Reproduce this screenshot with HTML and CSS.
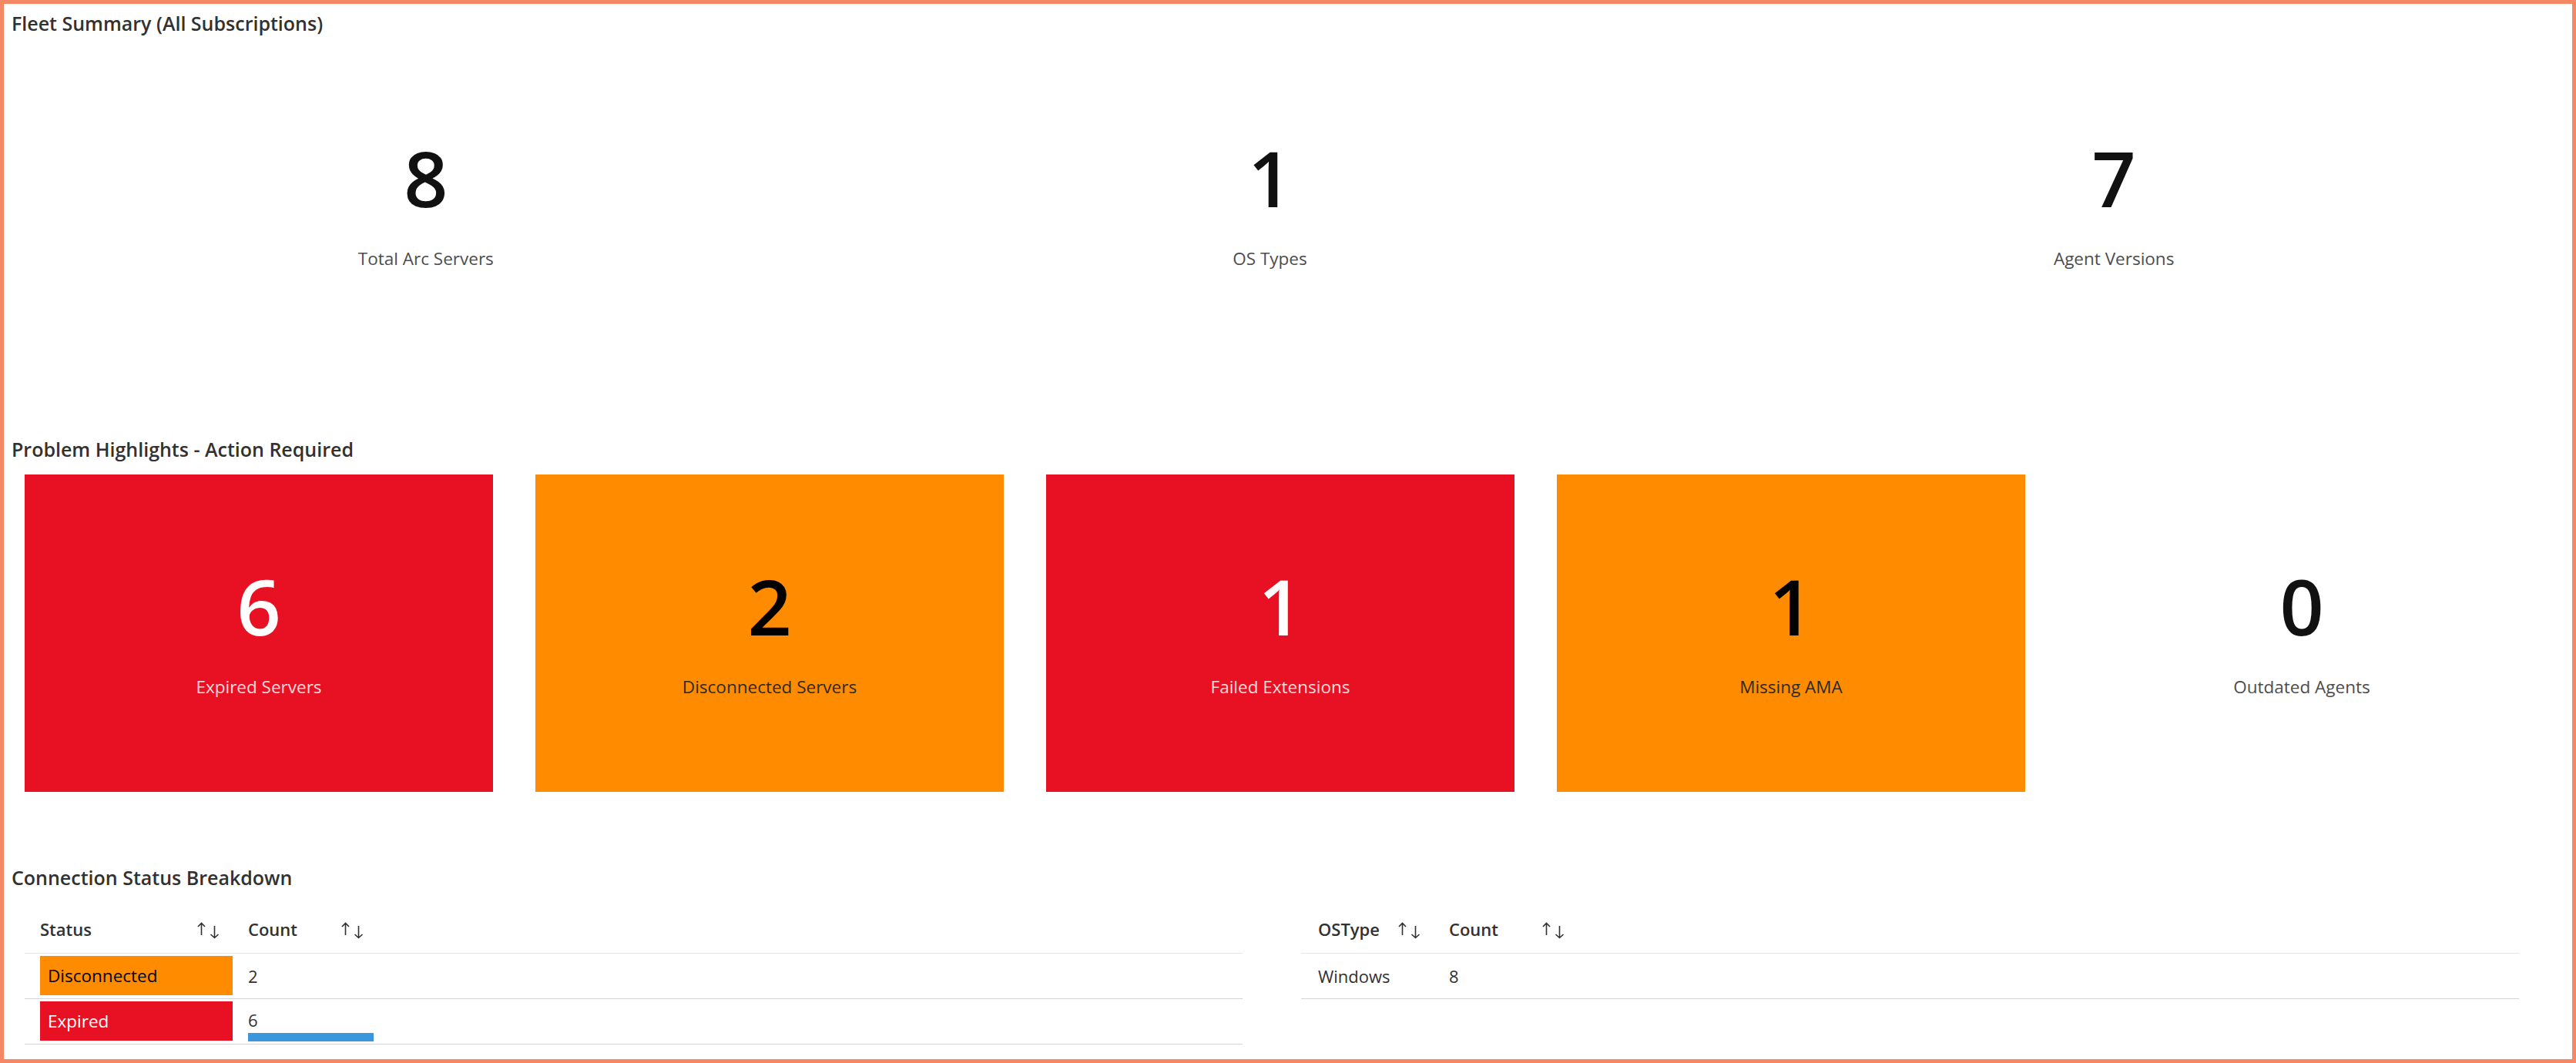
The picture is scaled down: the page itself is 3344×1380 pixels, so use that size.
FILE: index.html
```html
<!DOCTYPE html>
<html lang="en">
<head>
<meta charset="utf-8">
<title>Fleet Summary</title>
<link rel="stylesheet" href="styles.css">
</head>
<body>
<div class="frame">
  <section class="section">
    <h2 class="title">Fleet Summary (All Subscriptions)</h2>
    <div class="fleet-tiles">
      <div class="tile"><div class="num">8</div><div class="label">Total Arc Servers</div></div>
      <div class="tile"><div class="num">1</div><div class="label">OS Types</div></div>
      <div class="tile"><div class="num">7</div><div class="label">Agent Versions</div></div>
    </div>
  </section>

  <section class="section gap">
    <h2 class="title t2">Problem Highlights - Action Required</h2>
    <div class="problem-tiles">
      <div class="tile red"><div class="num">6</div><div class="label">Expired Servers</div></div>
      <div class="tile orange"><div class="num">2</div><div class="label">Disconnected Servers</div></div>
      <div class="tile red"><div class="num">1</div><div class="label">Failed Extensions</div></div>
      <div class="tile orange"><div class="num">1</div><div class="label">Missing AMA</div></div>
      <div class="tile"><div class="num">0</div><div class="label">Outdated Agents</div></div>
    </div>
  </section>

  <section class="section gap">
    <h2 class="title">Connection Status Breakdown</h2>
    <div class="tables">
      <table class="grid">
        <colgroup><col class="c-status"><col class="c-count"><col></colgroup>
        <thead>
          <tr>
            <th class="first"><div class="th-in"><span>Status</span>
              <svg class="sort" viewBox="0 0 30 22" width="30" height="22"><path d="M5.5 17V1.5M1 6l4.5-4.5L10 6M22.5 5v15.5M17.5 16l5 4.5 5-4.5" fill="none" stroke="#323130" stroke-width="1.6"/></svg></div></th>
            <th><div class="th-in"><span>Count</span>
              <svg class="sort" viewBox="0 0 30 22" width="30" height="22"><path d="M5.5 17V1.5M1 6l4.5-4.5L10 6M22.5 5v15.5M17.5 16l5 4.5 5-4.5" fill="none" stroke="#323130" stroke-width="1.6"/></svg></div></th>
            <th></th>
          </tr>
        </thead>
        <tbody>
          <tr>
            <td class="first pad"><div class="chip chip-orange">Disconnected</div></td>
            <td>2</td>
            <td></td>
          </tr>
          <tr>
            <td class="first pad"><div class="chip chip-red">Expired</div></td>
            <td class="barcell"><div class="barval">6</div><div class="bar" style="width:163px"></div></td>
            <td></td>
          </tr>
        </tbody>
      </table>

      <table class="grid right">
        <colgroup><col class="c-os"><col class="c-count"><col></colgroup>
        <thead>
          <tr>
            <th class="first"><div class="th-in"><span>OSType</span>
              <svg class="sort" viewBox="0 0 30 22" width="30" height="22"><path d="M5.5 17V1.5M1 6l4.5-4.5L10 6M22.5 5v15.5M17.5 16l5 4.5 5-4.5" fill="none" stroke="#323130" stroke-width="1.6"/></svg></div></th>
            <th><div class="th-in"><span>Count</span>
              <svg class="sort" viewBox="0 0 30 22" width="30" height="22"><path d="M5.5 17V1.5M1 6l4.5-4.5L10 6M22.5 5v15.5M17.5 16l5 4.5 5-4.5" fill="none" stroke="#323130" stroke-width="1.6"/></svg></div></th>
            <th></th>
          </tr>
        </thead>
        <tbody>
          <tr>
            <td class="first">Windows</td>
            <td>8</td>
            <td></td>
          </tr>
        </tbody>
      </table>
    </div>
  </section>
</div>
</body>
</html>
```

FILE: styles.css
```css
* { box-sizing: border-box; }
html, body {
  margin: 0;
  padding: 0;
  background: #ffffff;
}
body {
  font-family: "Segoe UI", "Open Sans", "Noto Sans", sans-serif;
  color: #323130;
}
.frame {
  width: 3344px;
  height: 1380px;
  border: 5px solid #f58764;
  padding: 0 47px 0 0;
  overflow: hidden;
  background: #ffffff;
}
.section.gap { margin-top: 86px; }
.title {
  margin: 0;
  height: 50px;
  line-height: 50px;
  padding-left: 10px;
  font-size: 25px;
  font-weight: 600;
  color: #323130;
}
.fleet-tiles {
  margin-top: 5px;
  display: grid;
  grid-template-columns: repeat(3, 1fr);
}
.problem-tiles {
  margin-top: 8px;
  padding-left: 27px;
  display: grid;
  grid-template-columns: repeat(5, 608px);
  column-gap: 55px;
}
.tile {
  height: 412px;
  display: flex;
  flex-direction: column;
  align-items: center;
  padding-top: 110px;
  background: #ffffff;
}
.num {
  font-size: 100px;
  line-height: 120px;
  height: 120px;
  font-weight: 600;
  color: #111111;
}
.label {
  margin-top: 31px;
  font-size: 22.5px;
  line-height: 30px;
  color: #4d4d4d;
}
.tile.red { background: #e81123; }
.tile.red .num { color: #ffffff; }
.tile.red .label { color: rgba(255, 255, 255, 0.85); }
.tile.orange { background: #ff8c00; }
.tile.orange .num { color: #000000; }
.tile.orange .label { color: #2b2b2b; }

.tables {
  margin-top: 12px;
  padding-left: 27px;
  display: flex;
  align-items: flex-start;
  gap: 76px;
}
.grid {
  width: 1581px;
  border-collapse: collapse;
  table-layout: fixed;
  font-size: 22px;
  color: #323130;
}
.c-status { width: 280px; }
.c-os { width: 182px; }
.c-count { width: 187px; }
.grid th {
  height: 61px;
  padding: 0 10px;
  text-align: left;
  font-weight: 600;
  border-bottom: 1px solid #e6e6e6;
  vertical-align: middle;
}
.grid th.first, .grid td.first { padding-left: 20px; }
.grid.right th.first, .grid.right td.first { padding-left: 22px; }
.th-in {
  display: flex;
  align-items: center;
  justify-content: space-between;
  padding-right: 16px;
}
.sort { display: block; margin-top: 4px; }
.grid td {
  height: 59px;
  padding: 0 10px;
  border-bottom: 1px solid #d4d4d4;
  vertical-align: middle;
}
.grid td.pad { padding-top: 3px; padding-bottom: 3px; }
.chip {
  height: 51px;
  line-height: 51px;
  padding-left: 10px;
  font-size: 22.5px;
}
.chip-orange { background: #ff8c00; color: #000000; }
.chip-red { background: #e81123; color: #ffffff; }
.grid td.barcell {
  vertical-align: bottom;
  padding-bottom: 3px;
}
.barval { line-height: 28px; }
.bar {
  margin-top: 3px;
  height: 11px;
  background: #3a96dd;
}
```
